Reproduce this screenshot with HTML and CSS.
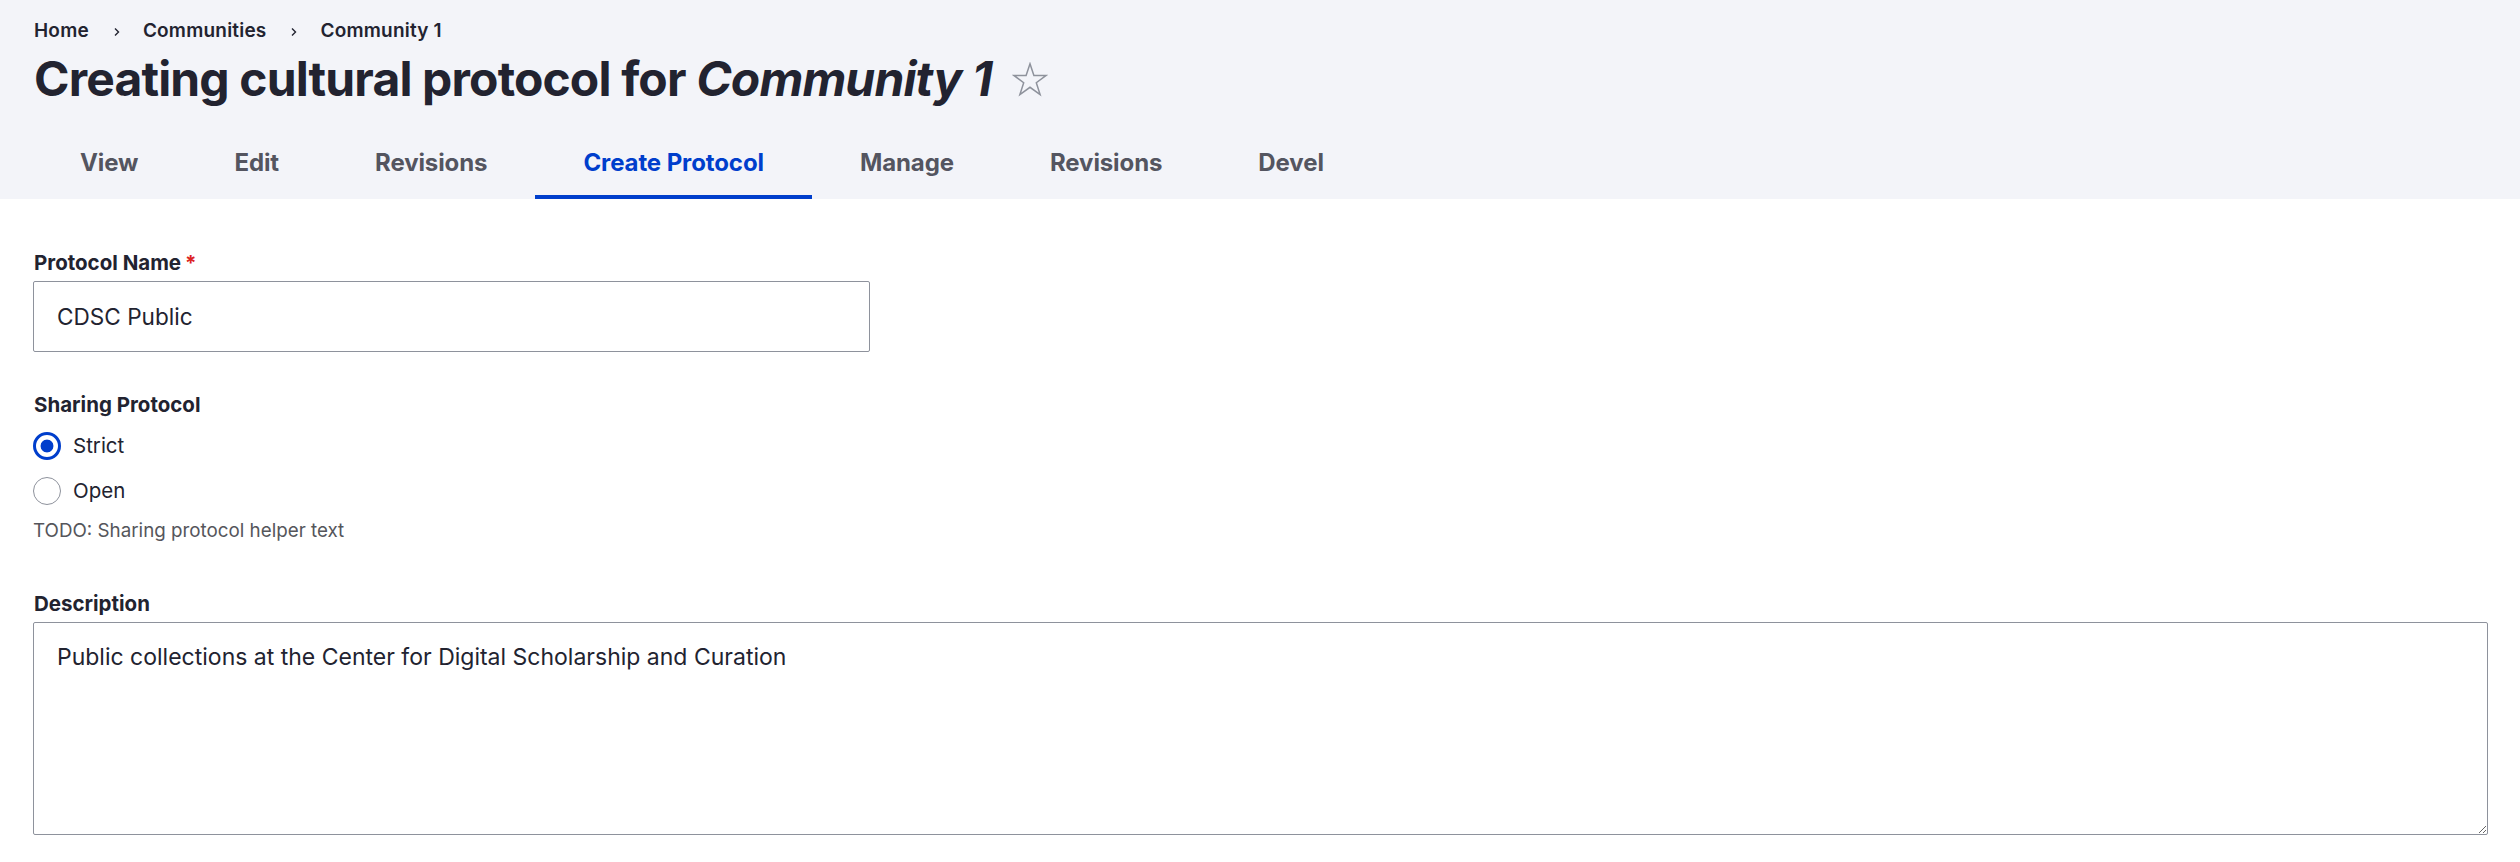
FILE: index.html
```html
<!DOCTYPE html>
<html lang="en">
<head>
<meta charset="utf-8">
<title>Creating cultural protocol for Community 1</title>
<link rel="stylesheet" href="styles.css">
</head>
<body>
<header class="page-header">
  <nav class="breadcrumb" aria-label="Breadcrumb">
    <ol class="breadcrumb-list">
      <li class="breadcrumb-item"><a href="#">Home</a></li>
      <li class="breadcrumb-sep"><svg width="8" height="10" viewBox="0 0 8 10"><path d="M2 1.5 L5.5 5 L2 8.5" fill="none" stroke="#222330" stroke-width="1.4"/></svg></li>
      <li class="breadcrumb-item"><a href="#">Communities</a></li>
      <li class="breadcrumb-sep"><svg width="8" height="10" viewBox="0 0 8 10"><path d="M2 1.5 L5.5 5 L2 8.5" fill="none" stroke="#222330" stroke-width="1.4"/></svg></li>
      <li class="breadcrumb-item"><a href="#">Community 1</a></li>
    </ol>
  </nav>
  <h1 class="page-title">Creating cultural protocol for <em>Community 1</em><span class="shortcut"><svg width="36" height="36" viewBox="0 0 36 36"><path d="M18 1.8 L21.9 13.4 L34.2 13.4 L24.3 20.7 L28.1 32.6 L18 25.3 L7.9 32.6 L11.7 20.7 L1.8 13.4 L14.1 13.4 Z" fill="none" stroke="#8e929c" stroke-width="1.5" stroke-linejoin="miter"/></svg></span></h1>
  <nav class="tabs" aria-label="Tabs">
    <ul class="tabs-list">
      <li><a class="tab" href="#">View</a></li>
      <li><a class="tab" href="#">Edit</a></li>
      <li><a class="tab" href="#">Revisions</a></li>
      <li><a class="tab is-active" href="#">Create Protocol</a></li>
      <li><a class="tab" href="#">Manage</a></li>
      <li><a class="tab" href="#">Revisions</a></li>
      <li><a class="tab" href="#">Devel</a></li>
    </ul>
  </nav>
</header>
<main class="content">
  <form class="protocol-form">
    <div class="form-item">
      <label class="form-label" for="name">Protocol Name<span class="required">*</span></label>
      <input class="form-text" id="name" type="text" value="CDSC Public">
    </div>
    <div class="form-item radios" role="radiogroup" aria-labelledby="sharing-label">
      <div class="form-label" id="sharing-label">Sharing Protocol</div>
      <label class="radio-row"><input class="form-radio" type="radio" name="sharing" checked><span>Strict</span></label>
      <label class="radio-row"><input class="form-radio" type="radio" name="sharing"><span>Open</span></label>
      <div class="description">TODO: Sharing protocol helper text</div>
    </div>
    <div class="form-item desc-item">
      <label class="form-label" for="desc">Description</label>
      <textarea class="form-textarea" id="desc">Public collections at the Center for Digital Scholarship and Curation</textarea>
    </div>
  </form>
</main>
</body>
</html>
```
FILE: styles.css
```css
* { box-sizing: border-box; }
html, body { margin: 0; padding: 0; }
body {
  font-family: Inter, "Noto Sans", "Liberation Sans", sans-serif;
  color: #222330;
  background: #ffffff;
  overflow: hidden;
}
a { color: inherit; text-decoration: none; }

.page-header {
  background: #f3f4f9;
  padding: 20px 34px 0 34px;
}
.breadcrumb-list {
  list-style: none;
  margin: 0;
  padding: 0;
  display: flex;
  align-items: center;
  font-size: 19px;
  line-height: 22px;
  font-weight: 600;
  letter-spacing: 0.2px;
}
.breadcrumb-sep {
  display: flex;
  align-items: center;
  margin: 0 22px 0 24px;
  padding-top: 1px;
}
.page-title {
  margin: 8px 0 0 0;
  font-size: 48px;
  line-height: 58px;
  font-weight: 700;
  letter-spacing: -0.85px;
}
.page-title em { font-style: italic; }
.shortcut {
  display: inline-block;
  vertical-align: top;
  margin: 12px 0 0 20px;
  width: 36px;
  height: 36px;
}
.shortcut svg { display: block; }

.tabs { margin: 19px 0 0 -2px; }
.tabs-list {
  list-style: none;
  margin: 0;
  padding: 0;
  display: flex;
}
.tab {
  display: block;
  padding: 21px 48px;
  font-size: 24px;
  line-height: 30px;
  font-weight: 700;
  letter-spacing: -0.1px;
  color: #545560;
}
.tab.is-active {
  color: #003ecc;
  box-shadow: inset 0 -4px 0 #003ecc;
}

.content {
  padding: 51px 32px 0 33px;
}
.protocol-form { margin: 0; }
.form-item { margin: 0; padding: 0; border: 0; }
.form-label {
  display: block;
  padding: 0;
  font-size: 20.5px;
  line-height: 25px;
  font-weight: 700;
  margin: 0 0 6px 1px;
}
.required {
  color: #dc2323;
  margin-left: 4px;
}
.form-text {
  display: block;
  width: 837px;
  height: 71px;
  border: 1px solid #8e929c;
  border-radius: 2px;
  padding: 0 23px;
  font-family: inherit;
  font-size: 22.6px;
  color: #222330;
  background: #fff;
  margin: 0;
}
.radios { margin-top: 40px; }
.radios .form-label { margin-bottom: 0; }
.radio-row {
  display: flex;
  align-items: center;
  height: 28px;
  margin-top: 17px;
  font-size: 20.5px;
  line-height: 28px;
}
.radios .form-label + .radio-row { margin-top: 15px; }
.form-radio {
  appearance: none;
  -webkit-appearance: none;
  margin: 0 12px 0 0;
  width: 28px;
  height: 28px;
  border: 1px solid #8e929c;
  border-radius: 50%;
  background: #fff;
  flex: none;
}
.form-radio:checked {
  border: 3px solid #003ecc;
  background: radial-gradient(circle at center, #003ecc 0, #003ecc 6px, #fff 6.8px);
}
.description {
  margin-top: 14px;
  font-size: 18.8px;
  line-height: 23px;
  color: #55565b;
}
.desc-item { margin-top: 49px; }
.form-textarea {
  display: block;
  width: 100%;
  height: 213px;
  border: 1px solid #8e929c;
  border-radius: 2px;
  padding: 18px 23px;
  font-family: inherit;
  font-size: 23px;
  line-height: 33.6px;
  color: #222330;
  background: #fff;
  margin: 0;
  resize: vertical;
}
```
